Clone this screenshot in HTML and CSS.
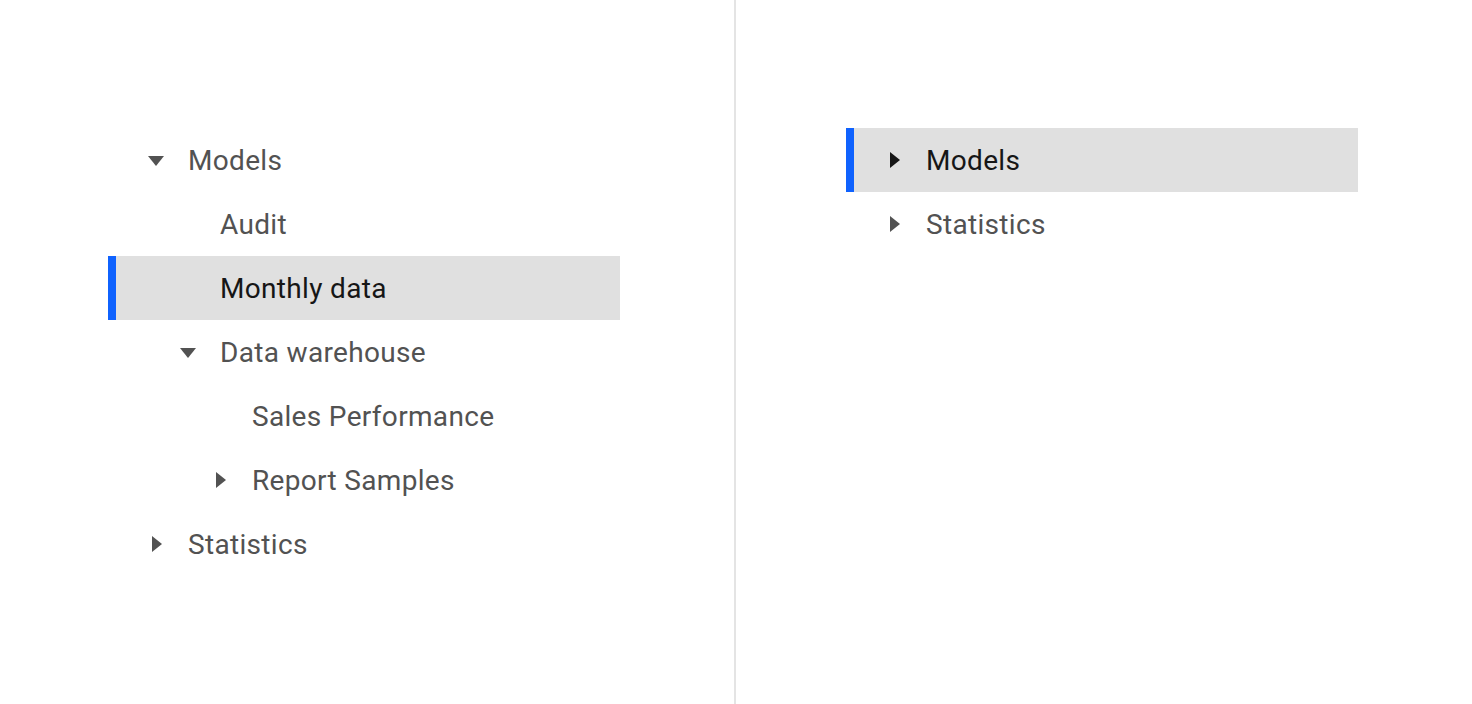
FILE: index.html
```html
<!DOCTYPE html>
<html lang="en">
<head>
<meta charset="utf-8">
<title>Tree view</title>
<link rel="stylesheet" href="styles.css">
</head>
<body>
<div class="page">
  <section class="panel panel-left">
    <ul class="tree">
      <li class="node">
        <div class="row" style="--depth:0">
          <svg class="caret caret-down" viewBox="0 0 32 32" width="32" height="32"><path d="M24 12l-8 10-8-10z"/></svg>
          <span class="label">Models</span>
        </div>
        <ul class="tree">
          <li class="node">
            <div class="row leaf" style="--depth:1"><span class="label">Audit</span></div>
          </li>
          <li class="node">
            <div class="row leaf selected" style="--depth:1"><span class="label">Monthly data</span></div>
          </li>
          <li class="node">
            <div class="row" style="--depth:1">
              <svg class="caret caret-down" viewBox="0 0 32 32" width="32" height="32"><path d="M24 12l-8 10-8-10z"/></svg>
              <span class="label">Data warehouse</span>
            </div>
            <ul class="tree">
              <li class="node">
                <div class="row leaf" style="--depth:2"><span class="label">Sales Performance</span></div>
              </li>
              <li class="node">
                <div class="row" style="--depth:2">
                  <svg class="caret" viewBox="0 0 32 32" width="32" height="32"><path d="M12 8l10 8-10 8z"/></svg>
                  <span class="label">Report Samples</span>
                </div>
              </li>
            </ul>
          </li>
        </ul>
      </li>
      <li class="node">
        <div class="row" style="--depth:0">
          <svg class="caret" viewBox="0 0 32 32" width="32" height="32"><path d="M12 8l10 8-10 8z"/></svg>
          <span class="label">Statistics</span>
        </div>
      </li>
    </ul>
  </section>
  <section class="panel panel-right">
    <ul class="tree">
      <li class="node">
        <div class="row selected" style="--depth:0">
          <svg class="caret" viewBox="0 0 32 32" width="32" height="32"><path d="M12 8l10 8-10 8z"/></svg>
          <span class="label">Models</span>
        </div>
      </li>
      <li class="node">
        <div class="row" style="--depth:0">
          <svg class="caret" viewBox="0 0 32 32" width="32" height="32"><path d="M12 8l10 8-10 8z"/></svg>
          <span class="label">Statistics</span>
        </div>
      </li>
    </ul>
  </section>
</div>
</body>
</html>
```

FILE: styles.css
```css
* { box-sizing: border-box; }

html, body {
  margin: 0;
  padding: 0;
  background: #ffffff;
}

body {
  font-family: Roboto, "Noto Sans", Arial, sans-serif;
  font-size: 28px;
  letter-spacing: 0.32px;
  color: #525252;
}

.page {
  display: flex;
  height: 704px;
}

.panel {
  padding-top: 128px;
}

.panel-left {
  flex: none;
  width: 736px;
  padding-left: 108px;
  border-right: 2px solid #e4e4e4;
}

.panel-right {
  flex: 1;
  padding-left: 110px;
}

.tree {
  list-style: none;
  margin: 0;
  padding: 0;
}

.panel > .tree {
  width: 512px;
}

.row {
  display: flex;
  align-items: center;
  height: 64px;
  padding-left: calc(32px + var(--depth) * 32px);
  border-left: 8px solid transparent;
}

.row .caret {
  flex: none;
  width: 32px;
  height: 32px;
  margin-left: -8px;
  margin-right: 16px;
  fill: #525252;
}

.row.leaf {
  padding-left: calc(32px + 40px + var(--depth) * 32px);
}

.row .label {
  line-height: 36px;
  padding-top: 2px;
  white-space: nowrap;
}

.row.selected {
  background: #e0e0e0;
  border-left-color: #0f62fe;
  color: #161616;
}

.row.selected .caret {
  fill: #161616;
}
```
